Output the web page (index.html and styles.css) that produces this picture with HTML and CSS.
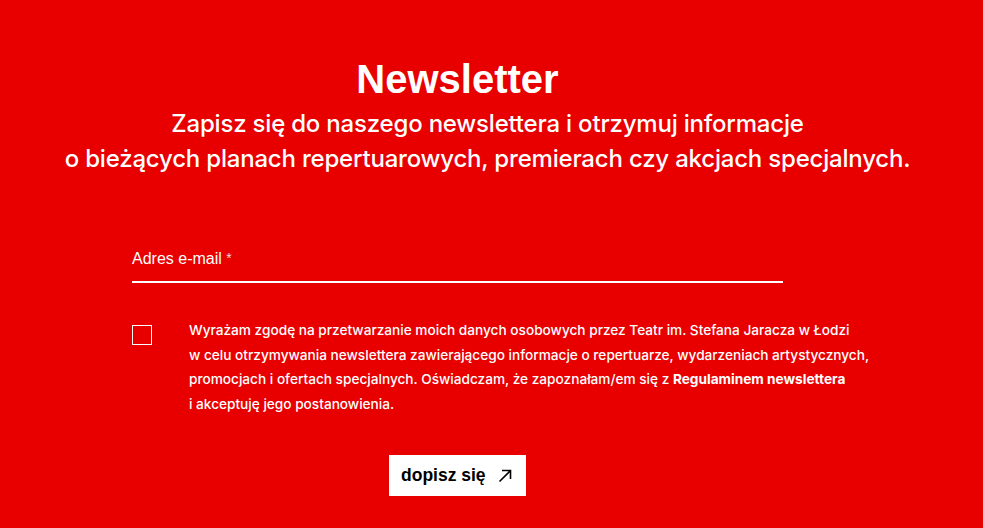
FILE: index.html
```html
<!DOCTYPE html>
<html lang="pl">
<head>
<meta charset="utf-8">
<title>Newsletter</title>
<link rel="stylesheet" href="styles.css">
</head>
<body>
<section class="newsletter">
  <header class="intro">
    <h1 class="title">Newsletter</h1>
    <p class="lead">Zapisz się do naszego newslettera i otrzymuj informacje<br>o bieżących planach repertuarowych, premierach czy akcjach specjalnych.</p>
  </header>
  <form class="form">
    <label class="field">
      <span class="field-label">Adres e-mail <span class="req">*</span></span>
      <input class="field-input" type="email">
    </label>
    <label class="consent">
      <span class="checkbox"></span>
      <span class="consent-text">Wyrażam zgodę na przetwarzanie moich danych osobowych przez Teatr im. Stefana Jaracza w Łodzi<br>w celu otrzymywania newslettera zawierającego informacje o repertuarze, wydarzeniach artystycznych,<br>promocjach i ofertach specjalnych. Oświadczam, że zapoznałam/em się z <strong>Regulaminem newslettera</strong><br>i akceptuję jego postanowienia.</span>
    </label>
    <div class="actions">
      <button class="submit" type="button">dopisz się
        <svg class="arrow" width="14" height="14" viewBox="0 0 14 14" fill="none" stroke="#000" stroke-width="1.6"><path d="M1.5 12.5 L12.5 1.5 M4 1.5 H12.5 V10"/></svg>
      </button>
    </div>
  </form>
</section>
</body>
</html>
```
FILE: styles.css
```css
html, body {
  margin: 0;
  padding: 0;
}
body {
  background: #e80000;
  color: #fff;
  font-family: "Liberation Sans", Arial, sans-serif;
  height: 528px;
  overflow: hidden;
}
.newsletter {
  padding-top: 55px;
}
.intro {
  text-align: center;
}
.title {
  margin: 0 0 0 -68px;
  font-size: 40px;
  font-weight: 700;
  line-height: 48px;
}
.lead {
  margin: 3px 0 0 -8px;
  font-family: Inter, "Liberation Sans", sans-serif;
  font-size: 24px;
  font-weight: 500;
  line-height: 35px;
  letter-spacing: -0.2px;
}
.form {
  margin: 66px 0 0 132px;
  width: 780px;
}
.field {
  display: flex;
  flex-direction: column;
  width: 651px;
  padding-top: 6px;
}
.field-label {
  font-size: 16px;
  line-height: 20px;
}
.req {
  font-size: 14px;
  color: #ffd6d6;
  vertical-align: 1px;
}
.field-input {
  margin-top: 4px;
  height: 8px;
  border: 0;
  border-bottom: 2px solid #fff;
  background: transparent;
  padding: 0;
  outline: none;
}
.consent {
  display: flex;
  gap: 37px;
  margin-top: 39px;
}
.checkbox {
  flex: none;
  width: 18px;
  height: 18px;
  border: 1px solid #fff;
  margin-top: 3px;
}
.consent-text {
  font-family: Inter, "Liberation Sans", sans-serif;
  font-size: 13.65px;
  font-weight: 500;
  line-height: 24.6px;
  white-space: nowrap;
  margin-top: -4px;
}
.consent-text strong {
  font-weight: 700;
}
.actions {
  margin: 39px 0 0 257px;
}
.submit {
  display: inline-flex;
  align-items: center;
  gap: 12px;
  height: 41px;
  width: 137px;
  padding: 0 0 0 12px;
  border: 0;
  background: #fff;
  color: #000;
  font-family: "Liberation Sans", Arial, sans-serif;
  font-size: 17.5px;
  font-weight: 700;
  cursor: pointer;
}
.arrow {
  flex: none;
}
```
